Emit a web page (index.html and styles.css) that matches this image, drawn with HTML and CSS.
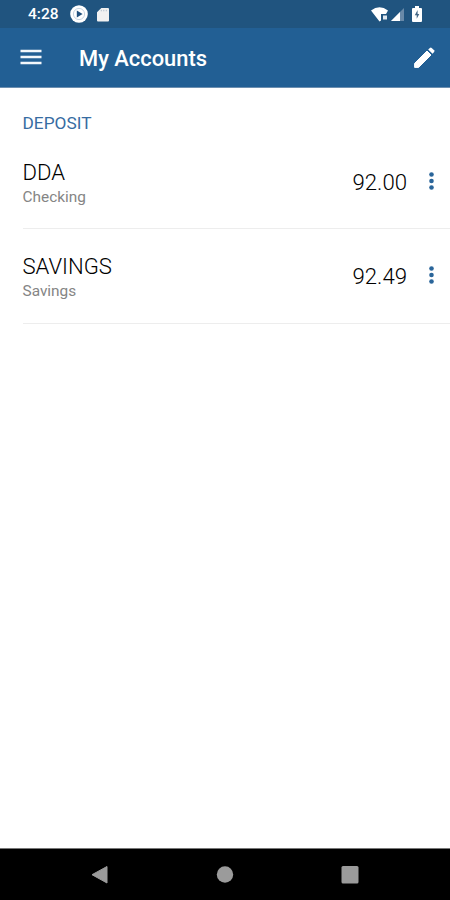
FILE: index.html
```html
<!DOCTYPE html>
<html lang="en">
<head>
  <meta charset="UTF-8">
  <meta name="viewport" content="width=device-width, initial-scale=1.0">
  <title>My Accounts</title>
  <link rel="stylesheet" href="styles.css">
</head>

<body>
  <div class="status-bar">
    <span class="time">4:28</span>
    <svg class="play" width="18" height="18" viewBox="0 0 18 18">
      <circle cx="9" cy="9" r="8.8" fill="#fff"/>
      <circle cx="9" cy="9" r="5.6" fill="none" stroke="#b9c9d9" stroke-width="0.8"/>
      <path d="M6.8 5.5v7l5.8-3.5z" fill="#20507e"/>
    </svg>
    <svg class="sd" width="12" height="15" viewBox="0 0 12 15">
      <path d="M4.3 1H11q1 0 1 1v11.5q0 1-1 1H1q-1 0-1-1V5.300z" fill="#f1f1f1"/>
      <path d="M4.3 2.8v1.500M6.8 2.800v1.500M9.3 2.800v1.500" stroke="#b4c1ce" stroke-width="1"/>
    </svg>
    <div class="signals">
      <svg width="18" height="15" viewBox="0 0 18 15">
        <path d="M0 3.5Q8.5-3 17 3.5L15 7H10V13.5L8.5 14.5Z" fill="#fff"/>
        <path d="M12 8.5h4v4h-4z" fill="#dfe7ef"/>
      </svg>
      <svg class="cell" width="13" height="13" viewBox="0 0 13 13">
        <path d="M13 0v13H0z" fill="#6889a8"/>
        <path d="M9 4v9H0z" fill="#fff"/>
      </svg>
      <svg class="battery" width="10" height="16" viewBox="0 0 10 16">
        <path d="M3 0h4v2h2q1 0 1 1v12q0 1-1 1H1q-1 0-1-1V3q0-1 1-1h2z" fill="#fff"/>
        <path d="M5.6 4L2.8 9.3h1.9v3.5l2.6-4.8h-1.7z" fill="#426584"/>
      </svg>
    </div>
  </div>

  <header class="app-bar">
    <svg class="menu" width="22" height="16" viewBox="0 0 22 16">
      <path d="M0.5 2h21M0.5 8h21M0.5 14h21" stroke="#f3f7fb" stroke-width="2.3"/>
    </svg>
    <h1>My Accounts</h1>
    <svg class="edit" width="21" height="21" viewBox="0 0 21 21">
      <path d="M0.6 20.4V16.400L13 4L17 8L4.600 20.4z" fill="#fff" stroke="#fff" stroke-linejoin="round"/>
      <path d="M14.200 2.400L15.9 0.9q0.9-0.700 1.8 0l2.400 2.400q0.7 0.9 0 1.8L18.500 6.700z" fill="#fff"/>
    </svg>
  </header>

  <main>
    <h2>DEPOSIT</h2>
    <div class="account first">
      <div class="info">
        <div class="name">DDA</div>
        <div class="type">Checking</div>
      </div>
      <div class="amount">92.00</div>
      <svg class="dots" width="5" height="18" viewBox="0 0 5 18">
        <circle cx="2.5" cy="2.5" r="2.3"/>
        <circle cx="2.5" cy="9" r="2.3"/>
        <circle cx="2.5" cy="15.5" r="2.3"/>
      </svg>
    </div>
    <div class="account">
      <div class="info">
        <div class="name">SAVINGS</div>
        <div class="type">Savings</div>
      </div>
      <div class="amount">92.49</div>
      <svg class="dots" width="5" height="18" viewBox="0 0 5 18">
        <circle cx="2.5" cy="2.5" r="2.3"/>
        <circle cx="2.5" cy="9" r="2.3"/>
        <circle cx="2.5" cy="15.5" r="2.3"/>
      </svg>
    </div>
  </main>

  <nav class="nav-bar">
    <svg width="18" height="20" viewBox="0 0 18 20"><path d="M16 1.5v16.5L1 9.7z" fill="#9b9b9b" stroke="#9b9b9b" stroke-linejoin="round"/></svg>
    <svg width="18" height="18" viewBox="0 0 18 18"><circle cx="9" cy="8.5" r="8.2" fill="#9b9b9b"/></svg>
    <svg width="18" height="18" viewBox="0 0 18 18"><rect x="0.5" y="0" width="17" height="17.5" rx="1.5" fill="#9b9b9b"/></svg>
  </nav>
</body>

</html>
```

FILE: styles.css
```css
* {
  box-sizing: border-box;
}

body {
  display: flex;
  flex-direction: column;
  height: 100vh;
  margin: 0;
  background-color: #fff;
  font-family: Roboto, "Liberation Sans", sans-serif;
}

.status-bar {
  display: flex;
  align-items: center;
  flex: none;
  height: 28px;
  padding: 0 28px;
  background-color: #20547f;
}

.time {
  width: 31px;
  font-size: 15.5px;
  font-weight: 500;
  color: #fff;
}

.play {
  margin-left: 11px;
}

.sd {
  margin-left: 9px;
}

.signals {
  display: flex;
  align-items: center;
  margin-left: auto;
}

.cell {
  margin-left: 2px;
}

.battery {
  margin-left: 8px;
}

.app-bar {
  display: flex;
  align-items: center;
  flex: none;
  height: 60px;
  padding: 0 15px 1px 20px;
  background-color: #225f94;
  border-bottom: 1px solid #6d8fb0;
}

h1 {
  margin: 3px auto 0 37px;
  font-size: 21.9px;
  font-weight: 500;
  line-height: 26px;
  color: #fff;
}

main {
  flex: 1;
  padding-left: 22.5px;
}

h2 {
  margin: 25px 0 0;
  font-size: 17.3px;
  font-weight: 400;
  line-height: 20px;
  color: #376ca2;
}

.account {
  display: flex;
  align-items: flex-start;
  height: 95px;
  padding: 24px 16px 0 0;
  border-bottom: 1px solid #ededed;
}

/* the row under the section title sits slightly lower */
.first {
  height: 96px;
  padding-top: 26px;
}

.info {
  flex: 1;
  padding-top: 1px;
}

.name {
  font-size: 22.1px;
  font-weight: 300;
  line-height: 25px;
  color: #000;
}

.type {
  margin-top: 2px;
  font-size: 15.4px;
  line-height: 20px;
  color: #858585;
}

.amount {
  padding-top: 10px;
  font-size: 22.2px;
  font-weight: 300;
  line-height: 26px;
  color: #000;
}

.dots {
  margin: 13px 0 0 22px;
  fill: #2a659a;
}

.nav-bar {
  display: flex;
  align-items: center;
  justify-content: space-between;
  flex: none;
  height: 52px;
  padding: 0 91px;
  background-color: #000;
  border-top: 1px solid #777;
}
```
